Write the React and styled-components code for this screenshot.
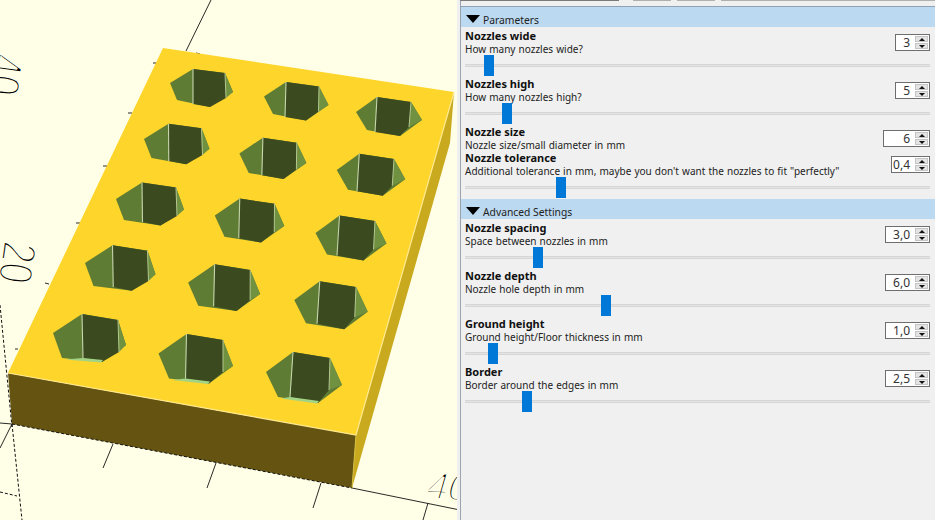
import React from "react";
import styled, { createGlobalStyle } from "styled-components";

const Global = createGlobalStyle`
  html, body { margin: 0; padding: 0; background: #f0f0f0; }
  #root { width: 935px; height: 520px; overflow: hidden; }
`;

const Window = styled.div`
  display: flex;
  width: 935px;
  height: 520px;
  font-family: "Noto Sans", "Liberation Sans", sans-serif;
  font-size: 11px;
  color: #111;
`;

const Viewport = styled.svg`
  display: block;
  flex: 0 0 460px;
  width: 460px;
  height: 520px;
  background: #ffffe8;
`;

const Panel = styled.div`
  flex: 1;
  display: flex;
  flex-direction: column;
  background: #f0f0f0;
  border-left: 1px solid #9aa4ad;
`;

const TopStrip = styled.div`
  display: flex;
  height: 6px;
  gap: 14px;
  border-bottom: 1px solid #8fa3b5;
  margin-left: -1px;
`;

const StripInput = styled.div`
  width: 159px;
  height: 1px;
  background: #7a7a7a;
`;

const StripButtons = styled.div`
  display: flex;
  flex: 1;
  gap: 6px;
`;

const StripButton = styled.div`
  flex: ${(p) => (p.$grow ? 1 : "0 0 38px")};
  height: 1px;
  background: #b0b0b0;
`;

const Header = styled.div`
  display: flex;
  align-items: flex-end;
  height: 20px;
  box-sizing: border-box;
  padding: 0 0 0 5px;
  background: #bcd9f2;
  font-size: 10.3px;
  line-height: 14px;
  color: #222;
`;

const Caret = styled.span`
  width: 0;
  height: 0;
  margin: 0 3px 4px 0;
  border-left: 7px solid transparent;
  border-right: 7px solid transparent;
  border-top: 8px solid #000;
`;

const Rows = styled.div`
  display: flex;
  flex-direction: column;
  padding: 2px 5px 0 4px;
`;

const Param = styled.div`
  display: grid;
  grid-template-columns: 1fr auto;
  margin-bottom: ${(p) => (p.$slider ? "1px" : "0")};
`;

const Labels = styled.div`
  display: flex;
  flex-direction: column;
  height: 26px;
`;

const Title = styled.div`
  font-weight: 700;
  line-height: 13px;
  color: #111;
`;

const Description = styled.div`
  font-size: 10px;
  word-spacing: 0.5px;
  line-height: 12px;
  padding-top: 1px;
  color: #222;
  white-space: nowrap;
`;

const Spin = styled.div`
  display: flex;
  align-items: stretch;
  width: ${(p) => p.$w}px;
  height: 17px;
  margin-top: 5px;
  box-sizing: border-box;
  background: #fff;
  border: 1px solid #6e6e6e;
`;

const SpinValue = styled.div`
  flex: 1;
  text-align: right;
  padding-right: 4px;
  line-height: 16px;
  font-size: 12px;
  color: #333;
`;

const SpinButtons = styled.div`
  display: flex;
  flex-direction: column;
  flex: 0 0 15px;
  gap: 1px;
  background: #fff;
  padding: 1px;
  box-sizing: border-box;
`;

const SpinButton = styled.div`
  flex: 1;
  display: flex;
  align-items: center;
  justify-content: center;
  background: #e4e4e4;
  border: 1px solid #c4c4c4;
  &::after {
    content: "";
    width: 0;
    height: 0;
    border-left: 3px solid transparent;
    border-right: 3px solid transparent;
    ${(p) => (p.$down ? "border-top: 3px solid #111;" : "border-bottom: 3px solid #111;")}
  }
`;

const Slider = styled.div`
  grid-column: 1 / -1;
  position: relative;
  height: 21px;
  &::before {
    content: "";
    position: absolute;
    left: 0;
    right: 0;
    top: 9px;
    height: 3px;
    background: #e4e4e4;
    border-top: 1px solid #d6d6d6;
    border-bottom: 1px solid #d6d6d6;
    box-sizing: border-box;
  }
`;

const Thumb = styled.div`
  position: absolute;
  top: 0;
  left: ${(p) => p.$x}px;
  width: 10px;
  height: 21px;
  background: #0078d7;
`;

const sections = [
  {
    name: "Parameters",
    params: [
      { title: "Nozzles wide", desc: "How many nozzles wide?", value: "3", w: 35, thumb: 19 },
      { title: "Nozzles high", desc: "How many nozzles high?", value: "5", w: 35, thumb: 37 },
      { title: "Nozzle size", desc: "Nozzle size/small diameter in mm", value: "6", w: 47 },
      { title: "Nozzle tolerance", desc: 'Additional tolerance in mm, maybe you don\'t want the nozzles to fit "perfectly"', value: "0,4", w: 39, thumb: 91 },
    ],
  },
  {
    name: "Advanced Settings",
    params: [
      { title: "Nozzle spacing", desc: "Space between nozzles in mm", value: "3,0", w: 45, thumb: 68 },
      { title: "Nozzle depth", desc: "Nozzle hole depth in mm", value: "6,0", w: 45, thumb: 136 },
      { title: "Ground height", desc: "Ground height/Floor thickness in mm", value: "1,0", w: 45, thumb: 23 },
      { title: "Border", desc: "Border around the edges in mm", value: "2,5", w: 45, thumb: 57 },
    ],
  },
];

const centres = [
  [[202, 88], [295, 101], [386, 116]],
  [[177, 144], [272, 158], [369, 174]],
  [[150, 204], [249, 220], [350, 237]],
  [[120, 268], [224, 287], [331, 304]],
  [[89, 338], [196, 358], [305, 376]],
];

// Hexagon corner offsets at the four corners of the grid: A B C D E F G H
const T00 = [[-32, -5], [-9, -19], [23, -15], [31, 4], [8, 19], [-25, 12], [-9, 16], [24, 10]];
const T02 = [[-30, -4], [-9, -19], [25, -14], [36, 4], [14, 20], [-19, 14], [-11, 16], [23, 11]];
const T40 = [[-36, -5], [-7, -24], [29, -18], [37, 7], [13, 24], [-27, 20], [-6, 20], [30, 14]];
const T42 = [[-39, -4], [-12, -24], [25, -18], [37, 9], [13, 27], [-27, 21], [-15, 21], [24, 14]];

const mix = (a, b, t) => a + (b - a) * t;

function hexPoints(r, c) {
  const [cx, cy] = centres[r][c];
  const u = c / 2;
  const v = r / 4;
  return T00.map((_, i) => [0, 1].map((k) =>
    mix(mix(T00[i][k], T02[i][k], u), mix(T40[i][k], T42[i][k], u), v) + (k === 0 ? cx : cy)
  ));
}

const pts = (list) => list.map((p) => p.join(",")).join(" ");

function Hole({ r, c }) {
  const [A, B, C, D, E, F, G, H] = hexPoints(r, c);
  const floor = r === 4;
  return (
    <g>
      <polygon points={pts([A, B, C, D, E, F])} fill="#5f7c34" />
      <polygon points={pts([C, D, H])} fill="#70913f" />
      <polygon points={pts([B, C, H, E, G])} fill="#3b4a1f" />
      {floor && <polygon points={pts([G, [F[0] + 3, F[1] + 1.5], [E[0] - 1, E[1] + 0.5], [E[0] + 1, E[1] - 2]])} fill="#a3d486" />}
      <line x1={B[0]} y1={B[1]} x2={G[0]} y2={G[1]} stroke="#c6d6ac" strokeWidth="1.1" />
      <line x1={C[0]} y1={C[1]} x2={H[0]} y2={H[1]} stroke="#b4c792" strokeWidth="1" />
    </g>
  );
}

const axisLines = [
  [0, 423, 12, 424], [12, 424, 0, 448], [113, 444, 103, 468], [216, 463, 207, 488],
  [321, 483, 313, 508], [428, 503, 423, 520], [352, 488, 460, 510], [186, 51, 211, 0],
  [153, 63, 157, 63], [128, 113, 132, 113], [103, 166, 107, 166], [76, 223, 80, 223],
  [45, 283, 49, 284], [15, 349, 18, 349], [196, 53, 200, 54],
];

const dashedLines = [
  [12, 424, 352, 488], [12, 424, 22, 520], [0, 492, 17, 496], [0, 305, 12, 427],
];

const AxisLabel = ({ x, y, rotate, skew = 0, sx = 1, size = 48, thin = 2.4, children }) => (
  <text
    transform={`translate(${x} ${y}) rotate(${rotate}) skewX(${skew}) scale(${sx} 1)`}
    fontFamily="Liberation Sans, sans-serif"
    fontSize={size}
    fill="#000"
    stroke="#ffffe8"
    strokeWidth={thin}
    style={{ paintOrder: "fill stroke" }}
  >
    {children}
  </text>
);

function Scene() {
  return (
    <Viewport viewBox="0 0 460 520">
      {axisLines.map((l, i) => (
        <line key={i} x1={l[0]} y1={l[1]} x2={l[2]} y2={l[3]} stroke="#111" strokeWidth="0.9" />
      ))}
      <AxisLabel x={-9} y={52} rotate={98} sx={0.78}>40</AxisLabel>
      <AxisLabel x={4} y={240} rotate={98} sx={0.78}>20</AxisLabel>
      <AxisLabel x={424} y={498} rotate={4} skew={-12} size={38} thin={2.2}>40</AxisLabel>
      <rect x="457" y="0" width="3" height="520" fill="#f0f0f0" />
      <polygon points="454,92 356,435 352,488 450,143" fill="#c9a91d" />
      <polygon points="8,373 356,435 352,488 12,424" fill="#655411" />
      <polygon points="163,48 454,92 356,435 8,373" fill="#fed52a" />
      <polyline points="8,373 356,435 454,92" fill="none" stroke="#ffe98f" strokeWidth="1.2" />
      <line x1="356" y1="435" x2="352" y2="488" stroke="#d8c040" strokeWidth="1" />
      {dashedLines.map((l, i) => (
        <line key={i} x1={l[0]} y1={l[1]} x2={l[2]} y2={l[3]} stroke="#111" strokeWidth="1" strokeDasharray="3 2" />
      ))}
      {centres.map((row, r) => row.map((_, c) => <Hole key={`${r}-${c}`} r={r} c={c} />))}
    </Viewport>
  );
}

export default function App() {
  return (
    <Window>
      <Global />
      <Scene />
      <Panel>
        <TopStrip>
          <StripInput />
          <StripButtons>
            <StripButton />
            <StripButton />
            <StripButton $grow />
          </StripButtons>
        </TopStrip>
        {sections.map((s) => (
          <React.Fragment key={s.name}>
            <Header>
              <Caret />
              {s.name}
            </Header>
            <Rows>
              {s.params.map((p) => (
                <Param key={p.title} $slider={p.thumb !== undefined}>
                  <Labels>
                    <Title>{p.title}</Title>
                    <Description>{p.desc}</Description>
                  </Labels>
                  <Spin $w={p.w}>
                    <SpinValue>{p.value}</SpinValue>
                    <SpinButtons>
                      <SpinButton />
                      <SpinButton $down />
                    </SpinButtons>
                  </Spin>
                  {p.thumb !== undefined && (
                    <Slider>
                      <Thumb $x={p.thumb} />
                    </Slider>
                  )}
                </Param>
              ))}
            </Rows>
          </React.Fragment>
        ))}
      </Panel>
    </Window>
  );
}
